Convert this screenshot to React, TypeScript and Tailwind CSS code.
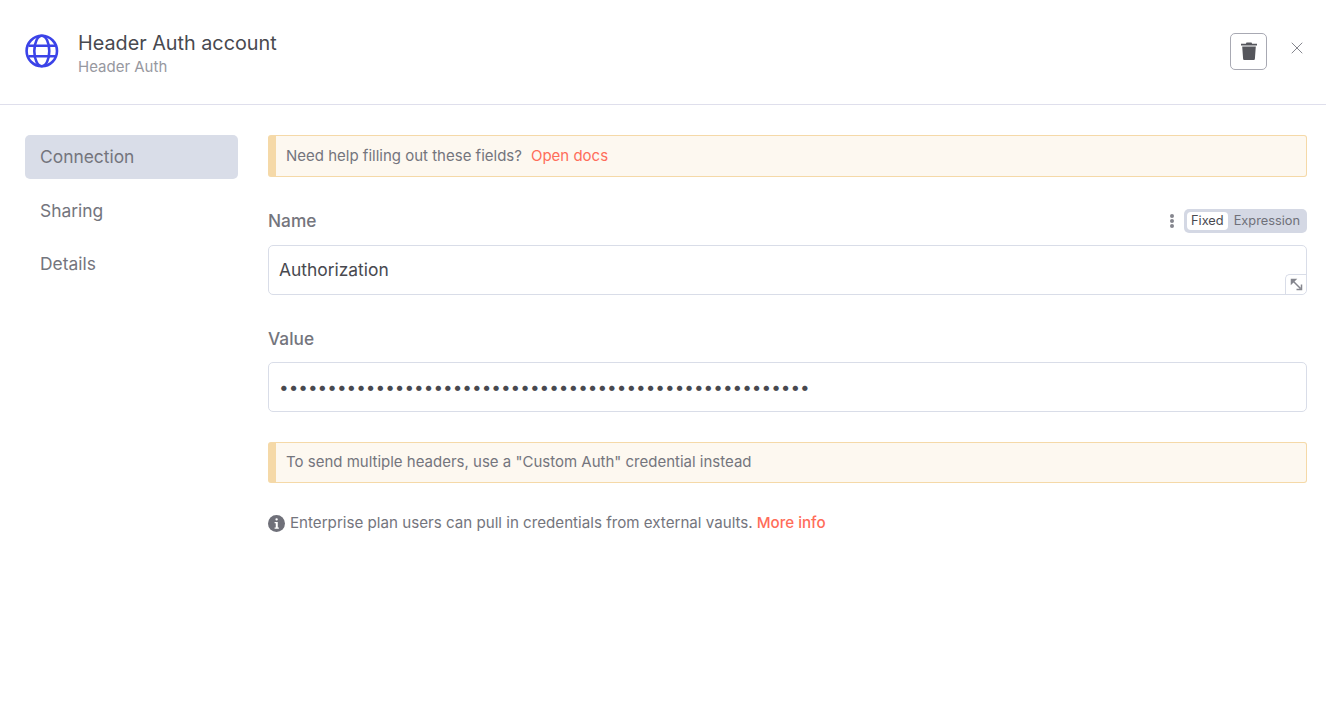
import React from 'react';
import { X } from 'lucide-react';

const Callout: React.FC<{ children: React.ReactNode; className?: string }> = ({ children, className }) => (
  <div className={`flex items-center rounded-[3px] border border-[#f5d9a8] border-l-[8px] border-l-[#f5d9a8] bg-[#fdf8f0] pl-[10px] text-[15px] text-[#74757d] ${className}`}>
    <div>{children}</div>
  </div>
);

const GlobeIcon = () => (
  <svg width="34" height="34" viewBox="0 0 34 34" fill="none" stroke="#3b43e8" strokeWidth="2.6">
    <circle cx="16.8" cy="17" r="15.2" />
    <ellipse cx="16.8" cy="17" rx="7.5" ry="15.2" />
    <path d="M3.5 11.8h27M3.5 22.2h27" />
  </svg>
);

const TrashIcon = () => (
  <svg width="16" height="18" viewBox="0 0 16 18" fill="#55565c">
    <path d="M5.5 0.5h5l.6 1.3H16v1.7H0V1.8h4.9z" />
    <path d="M1.2 4.6h13.6l-.9 12.1c-.05.7-.6 1.3-1.3 1.3H3.4c-.7 0-1.25-.6-1.3-1.3z" />
  </svg>
);

const InfoIcon = () => (
  <svg width="17" height="17" viewBox="0 0 16 16" className="shrink-0">
    <circle cx="8" cy="8" r="8" fill="#6f7079" />
    <rect x="7" y="3" width="2.2" height="2.2" rx="1" fill="#fff" />
    <path d="M6.2 6.6h3v5.1h1v1.2H6.2v-1.2h1.1V7.8H6.2z" fill="#fff" />
  </svg>
);

const ExpandIcon = () => (
  <svg width="13" height="13" viewBox="0 0 13 13" fill="none" stroke="#85868e" strokeWidth="1.5">
    <path d="M1.5 5.5v-4h4z" fill="#85868e" />
    <path d="M2.5 2.5l8 8M11.5 6.5v5h-5" />
  </svg>
);

export default function App() {
  const dots = '•'.repeat(55);
  return (
    <div className="flex h-[721px] w-[1326px] flex-col overflow-hidden bg-white font-['Inter',sans-serif]">
      <header className="flex h-[105px] shrink-0 items-center border-b border-[#dfdfec] pb-[2px] pl-[25px] pr-[19px]">
        <GlobeIcon />
        <div className="ml-[19px] flex flex-col pt-[6px]">
          <div className="text-[19.8px] leading-[26px] text-[#48494f]">Header Auth account</div>
          <div className="text-[15px] leading-[22px] text-[#97989f]">Header Auth</div>
        </div>
        <div className="ml-auto flex items-center">
          <button className="flex h-[37px] w-[37px] items-center justify-center rounded-[5px] border border-[#a8a9b3] bg-white">
            <TrashIcon />
          </button>
          <X size={20} strokeWidth={1.2} className="mb-[6px] ml-[20px] text-[#85868e]" />
        </div>
      </header>
      <div className="flex min-h-0 flex-1 pl-[25px] pr-[19px] pt-[30px]">
        <nav className="w-[213px] shrink-0 text-[17.4px] text-[#74757d]">
          <div className="flex h-[44px] items-center rounded-[5px] bg-[#d9dde8] pl-[15px]">Connection</div>
          <div className="mt-[10px] flex h-[44px] items-center pl-[15px]">Sharing</div>
          <div className="mt-[9px] flex h-[44px] items-center pl-[15px]">Details</div>
        </nav>
        <main className="ml-[30px] flex-1">
          <Callout className="h-[42px]">
            Need help filling out these fields?<a className="ml-[9px] text-[#ff6d5a]">Open docs</a>
          </Callout>
          <div className="mt-[32px] flex h-[24px] items-center justify-between">
            <label className="text-[17.3px] font-medium text-[#74757d]">Name</label>
            <div className="flex items-center">
              <div className="mr-[10px] flex flex-col gap-[1.5px]">
                <span className="h-[3.5px] w-[4px] rounded-full bg-[#85868e]" />
                <span className="h-[3.5px] w-[4px] rounded-full bg-[#85868e]" />
                <span className="h-[3.5px] w-[4px] rounded-full bg-[#85868e]" />
              </div>
              <div className="flex h-[24px] w-[123px] items-center rounded-[5px] bg-[#d4d8e4] p-[3px] text-[12.8px]">
                <span className="flex h-[18px] items-center rounded-[4px] bg-white px-[4px] text-[#48494f]">Fixed</span>
                <span className="ml-[6px] text-[#6f7079]">Expression</span>
              </div>
            </div>
          </div>
          <div className="relative mt-[12px] flex h-[50px] items-center rounded-[5px] border border-[#d9dde8] pl-[10px] text-[17.4px] text-[#48494f]">
            Authorization
            <div className="absolute bottom-0 right-0 flex h-[20px] w-[21px] items-center justify-center rounded-br-[5px] rounded-tl-[5px] border-l border-t border-[#d9dde8] bg-white">
              <ExpandIcon />
            </div>
          </div>
          <label className="mt-[32px] block text-[17.3px] font-medium leading-[24px] text-[#74757d]">Value</label>
          <div className="mt-[11px] flex h-[50px] items-center rounded-[5px] border border-[#d9dde8] pl-[10px] text-[17.17px] text-[#48494f]">
            {dots}
          </div>
          <Callout className="mt-[30px] h-[41px]">To send multiple headers, use a "Custom Auth" credential instead</Callout>
          <div className="mt-[29px] flex items-center text-[15.15px] text-[#74757d]">
            <span className="mr-[5px]"><InfoIcon /></span>
            Enterprise plan users can pull in credentials from external vaults.
            <a className="ml-[4px] font-medium text-[#ff6d5a]">More info</a>
          </div>
        </main>
      </div>
    </div>
  );
}
